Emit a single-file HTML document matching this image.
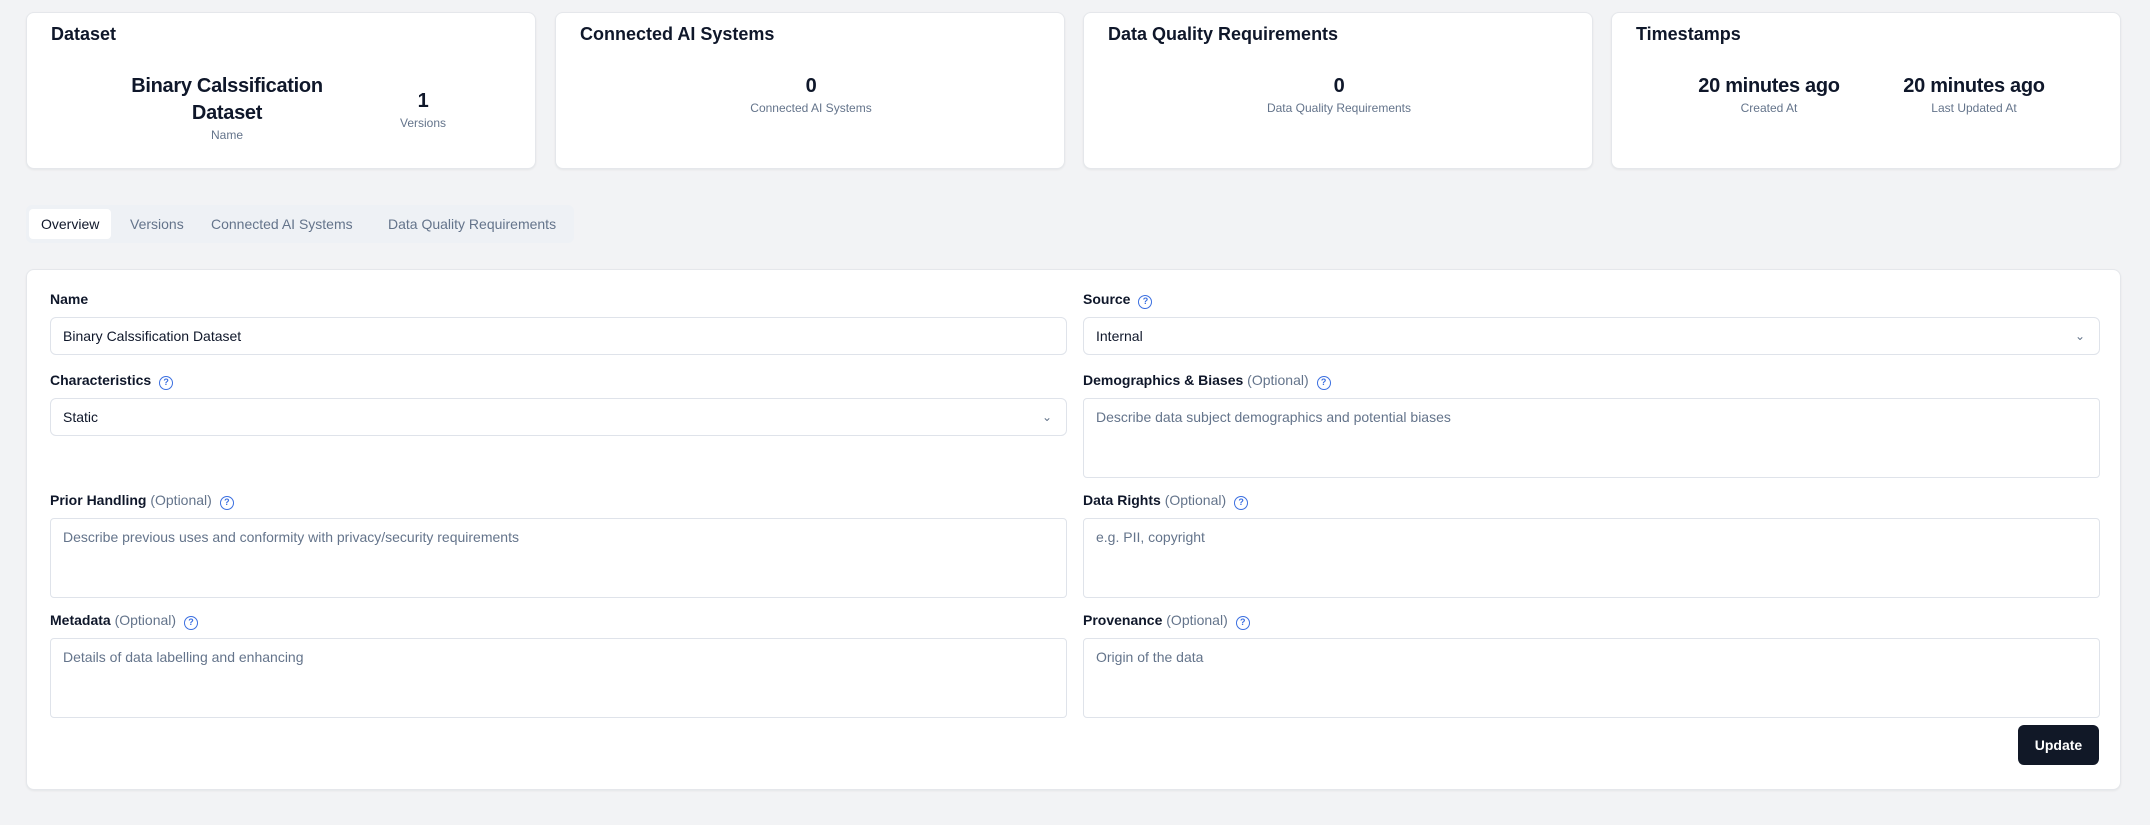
<!DOCTYPE html>
<html><head><meta charset="utf-8"><style>
*{box-sizing:border-box;margin:0;padding:0}
body{width:2150px;height:825px;background:#f2f3f5;font-family:"Liberation Sans",sans-serif;color:#0f172a;position:relative;overflow:hidden}
.card{position:absolute;top:12px;width:510px;height:157px;background:#fff;border:1px solid #e5e7eb;border-radius:8px;box-shadow:0 1px 2px rgba(0,0,0,.06)}
.card h3{position:absolute;left:24px;top:11px;font-size:18px;font-weight:bold}
.stat{position:absolute;text-align:center}
.stat .v{font-size:20px;font-weight:bold;line-height:27px;letter-spacing:-0.3px}
.stat .l{font-size:12px;color:#64748b;margin-top:1px}
.tabs{position:absolute;left:26px;top:205px;height:38px;width:548px;background:#eef1f5;border-radius:6px}
.tab{position:absolute;top:4px;height:30px;line-height:30px;font-size:14px;color:#64748b}
.tab.a{background:#fff;color:#0f172a;border-radius:4px;padding:0 12px;left:3px}
.form{position:absolute;left:26px;top:269px;width:2095px;height:521px;background:#fff;border:1px solid #e5e7eb;border-radius:8px;box-shadow:0 1px 2px rgba(0,0,0,.06)}
.lab{position:absolute;font-size:14px;font-weight:bold;color:#0f172a;line-height:16px}
.lab .o{font-weight:normal;color:#64748b}
.q{display:inline-block;width:14px;height:14px;border:1.5px solid #3b6fe0;border-radius:50%;font-size:9px;line-height:11px;text-align:center;color:#3b6fe0;font-weight:bold;margin-left:8px;vertical-align:0}
.in{position:absolute;border:1px solid #dfe3ea;border-radius:6px;font-size:14px;padding:0 12px;line-height:36px;height:38px;width:1017px}
.ta{height:80px;border-radius:4px;color:#64748b;line-height:20px;padding:8px 12px}
.chev{position:absolute;right:14px;top:0;color:#64748b;font-size:12px}
.btn{position:absolute;left:1991px;top:455px;width:81px;height:40px;background:#111827;color:#fff;border-radius:6px;font-size:14px;font-weight:bold;text-align:center;line-height:40px}
</style></head><body>
<div class="card" style="left:26px"><h3>Dataset</h3>
<div class="stat" style="left:70px;top:60px;width:260px"><div class="v">Binary Calssification<br>Dataset</div><div class="l">Name</div></div>
<div class="stat" style="left:361px;top:75px;width:70px"><div class="v">1</div><div class="l">Versions</div></div></div>
<div class="card" style="left:555px"><h3>Connected AI Systems</h3>
<div class="stat" style="left:0;top:60px;width:510px"><div class="v">0</div><div class="l">Connected AI Systems</div></div></div>
<div class="card" style="left:1083px"><h3>Data Quality Requirements</h3>
<div class="stat" style="left:0;top:60px;width:510px"><div class="v">0</div><div class="l">Data Quality Requirements</div></div></div>
<div class="card" style="left:1611px"><h3>Timestamps</h3>
<div class="stat" style="left:72px;top:60px;width:170px"><div class="v">20 minutes ago</div><div class="l">Created At</div></div>
<div class="stat" style="left:277px;top:60px;width:170px"><div class="v">20 minutes ago</div><div class="l">Last Updated At</div></div></div>
<div class="tabs"><div class="tab a">Overview</div><div class="tab" style="left:104px">Versions</div><div class="tab" style="left:185px">Connected AI Systems</div><div class="tab" style="left:362px">Data Quality Requirements</div></div>
<div class="form">
<div class="lab" style="left:23px;top:21px">Name</div>
<div class="in" style="left:23px;top:47px">Binary Calssification Dataset</div>
<div class="lab" style="left:1056px;top:21px">Source<span class="q">?</span></div>
<div class="in" style="left:1056px;top:47px">Internal<span class="chev">&#8964;</span></div>
<div class="lab" style="left:23px;top:102px">Characteristics<span class="q">?</span></div>
<div class="in" style="left:23px;top:128px">Static<span class="chev">&#8964;</span></div>
<div class="lab" style="left:1056px;top:102px">Demographics &amp; Biases <span class="o">(Optional)</span><span class="q">?</span></div>
<div class="in ta" style="left:1056px;top:128px">Describe data subject demographics and potential biases</div>
<div class="lab" style="left:23px;top:222px">Prior Handling <span class="o">(Optional)</span><span class="q">?</span></div>
<div class="in ta" style="left:23px;top:248px">Describe previous uses and conformity with privacy/security requirements</div>
<div class="lab" style="left:1056px;top:222px">Data Rights <span class="o">(Optional)</span><span class="q">?</span></div>
<div class="in ta" style="left:1056px;top:248px">e.g. PII, copyright</div>
<div class="lab" style="left:23px;top:342px">Metadata <span class="o">(Optional)</span><span class="q">?</span></div>
<div class="in ta" style="left:23px;top:368px">Details of data labelling and enhancing</div>
<div class="lab" style="left:1056px;top:342px">Provenance <span class="o">(Optional)</span><span class="q">?</span></div>
<div class="in ta" style="left:1056px;top:368px">Origin of the data</div>
<div class="btn">Update</div>
</div>
</body></html>
